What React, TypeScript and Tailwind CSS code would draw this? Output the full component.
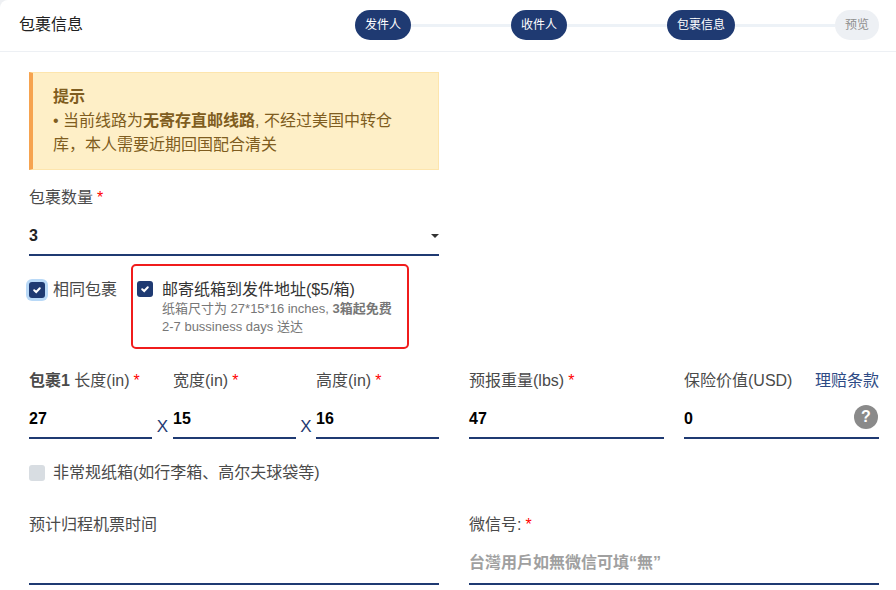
import React from 'react'

const font = { fontFamily: '"Liberation Sans", "Noto Sans CJK SC", sans-serif' }

function Star() {
  return <span className="text-[#f00] ml-1 text-[16px]">*</span>
}

function CheckBox({ focused }: { focused?: boolean }) {
  return (
    <span
      className={`w-4 h-4 shrink-0 rounded-[3px] bg-[#1f3a72] flex items-center justify-center ${focused ? 'ring-[3px] ring-[#b9d9f7] ' : ''}`}
    >
      <svg width="10" height="10" viewBox="0 0 10 10" fill="none">
        <path d="M2.2 5.2 L4.2 7 L7.8 3.2" stroke="#fff" strokeWidth="2" strokeLinecap="round" />
      </svg>
    </span>
  )
}

function Field({ value, className = '' }: { value: string; className?: string }) {
  return (
    <div className={`h-[40px] border-b-2 border-[#1f3a72] flex items-center pt-[2px] text-[16px] font-bold text-black ${className}`}>
      {value}
    </div>
  )
}

function Step({ label, active = true }: { label: string; active?: boolean }) {
  return (
    <div
      className={`h-[30px] px-[10px] rounded-full flex items-center text-[12px] ${active ? 'bg-[#1f3a72] text-white' : 'bg-[#edf0f4] text-[#8f8f8f]'}`}
    >
      {label}
    </div>
  )
}

function Line() {
  return <div className="flex-1 h-[3px] bg-[#edf2f7]" />
}

export default function App() {
  return (
    <div className="w-[896px] h-[590px] overflow-hidden bg-[#eef0f3]" style={font}>
      <div className="h-full bg-white rounded-tl-[8px] text-[16px] text-[#4a4a4a]">
        {/* Header */}
        <div className="h-[52px] border-b border-[#edf0f4] flex items-center pl-[19px] pr-[17px]">
          <div className="text-[#222] mb-[1px]">包裹信息</div>
          <div className="ml-auto w-[524px] flex items-center mb-[1px]">
            <Step label="发件人" />
            <Line />
            <Step label="收件人" />
            <Line />
            <Step label="包裹信息" />
            <Line />
            <Step label="预览" active={false} />
          </div>
        </div>

        <div className="pl-[29px] pr-[17px] pt-[20px]">
          {/* Notice + count */}
          <div className="w-[410px]">
            <div className="h-[98px] bg-[#feefc7] border border-[#fde5ad] border-l-4 border-l-[#f6a34f] pl-[20px] pr-[40px] pt-[12px] text-[#7f5d20] leading-[24px]">
              <div className="font-bold">提示</div>
              <div>
                • 当前线路为<b>无寄存直邮线路</b>, 不经过美国中转仓库，本人需要近期回国配合清关
              </div>
            </div>
            <div className="mt-[17px] h-[22px] leading-[22px]">
              包裹数量
              <Star />
            </div>
            <div className="mt-[11px] h-[36px] border-b-2 border-[#1f3a72] flex items-center justify-between pb-[2px] text-[16px] font-bold text-[#222]">
              3
              <span className="w-0 h-0 border-x-[4px] border-x-transparent border-t-[4px] border-t-[#333]" />
            </div>
          </div>

          {/* Checkbox row */}
          <div className="flex mt-[8px] h-[85px]">
            <div className="w-[102px] flex pt-[18px] gap-[8px]">
              <CheckBox focused />
              <span className="leading-[16px]">相同包裹</span>
            </div>
            <div className="w-[278px] border-[2px] border-[#f01c1c] rounded-[5px] pl-[4px] pt-[15px] flex gap-[9px]">
              <CheckBox />
              <div className="-mt-[1px]">
                <div className="leading-[20px] text-[#333]">邮寄纸箱到发件地址($5/箱)</div>
                <div className="text-[13px] leading-[18px] text-[#777]">
                  纸箱尺寸为 27*15*16 inches, <b>3箱起免费</b>
                </div>
                <div className="text-[13px] leading-[18px] text-[#777]">2-7 bussiness days 送达</div>
              </div>
            </div>
          </div>

          {/* Dimensions */}
          <div className="grid grid-cols-[410px_410px] gap-x-[30px] mt-[20px]">
            <div className="flex">
              <div className="w-[123px]">
                <div className="h-[24px] leading-[24px] whitespace-nowrap">
                  <b>包裹1</b> 长度(in)
                  <Star />
                </div>
                <Field value="27" className="mt-[6px]" />
              </div>
              <div className="w-[21px] text-[#1f3a72] text-[17px] self-end text-center leading-[24px]">X</div>
              <div className="w-[123px]">
                <div className="h-[24px] leading-[24px] whitespace-nowrap">
                  宽度(in)
                  <Star />
                </div>
                <Field value="15" className="mt-[6px]" />
              </div>
              <div className="w-[20px] text-[#1f3a72] text-[17px] self-end text-center leading-[24px]">X</div>
              <div className="w-[123px]">
                <div className="h-[24px] leading-[24px] whitespace-nowrap">
                  高度(in)
                  <Star />
                </div>
                <Field value="16" className="mt-[6px]" />
              </div>
            </div>
            <div className="flex gap-[20px]">
              <div className="w-[195px]">
                <div className="h-[24px] leading-[24px]">
                  预报重量(lbs)
                  <Star />
                </div>
                <Field value="47" className="mt-[6px]" />
              </div>
              <div className="w-[195px]">
                <div className="h-[24px] leading-[24px] flex justify-between">
                  <span>保险价值(USD)</span>
                  <span className="text-[#2d4a85]">理赔条款</span>
                </div>
                <div className="mt-[6px] relative">
                  <Field value="0" />
                  <span className="absolute right-[1px] top-[6px] w-[24px] h-[24px] rounded-full bg-[#8a8a8a] text-white font-bold text-[16px] flex items-center justify-center">
                    ?
                  </span>
                </div>
              </div>
            </div>
          </div>

          {/* Irregular box */}
          <div className="flex items-center gap-[8px] mt-[24px] h-[20px]">
            <span className="w-4 h-4 rounded-[3px] bg-[#d8dde2]" />
            <span>非常规纸箱(如行李箱、高尔夫球袋等)</span>
          </div>

          {/* Last row */}
          <div className="grid grid-cols-[410px_410px] gap-x-[30px] mt-[30px]">
            <div>
              <div className="h-[24px] leading-[24px]">预计归程机票时间</div>
              <div className="mt-[8px] h-[40px] border-b-2 border-[#1f3a72]" />
            </div>
            <div>
              <div className="h-[24px] leading-[24px]">
                微信号:
                <Star />
              </div>
              <div className="mt-[8px] h-[40px] border-b-2 border-[#1f3a72] flex items-center pb-[2px] font-bold text-[#a0a0a0]">
                台灣用戶如無微信可填“無”
              </div>
            </div>
          </div>
        </div>
      </div>
    </div>
  )
}
